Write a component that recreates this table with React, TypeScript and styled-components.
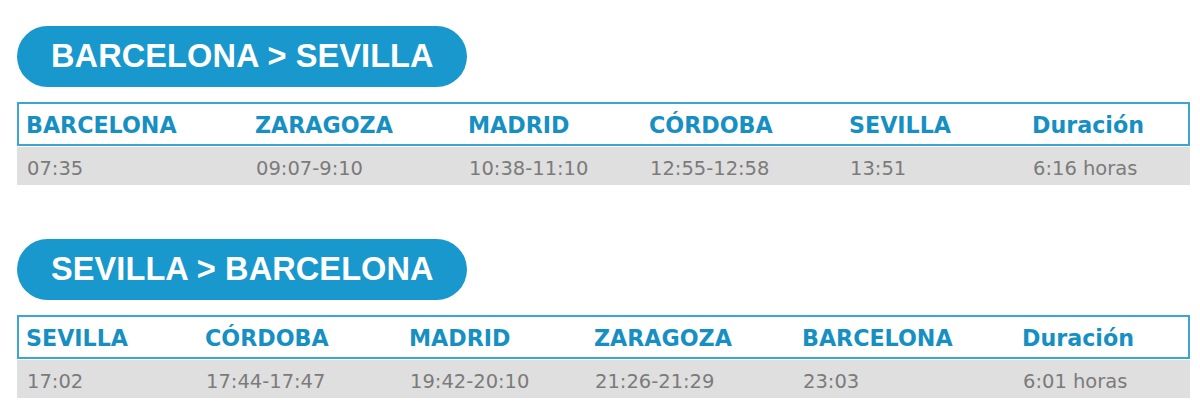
import React from "react";
import styled, { createGlobalStyle } from "styled-components";

const Colors = {
  Pill: "#1898cc",
  Head: "#168fc2",
  Border: "#3ba6d1",
  RowBg: "#dfdfdf",
  Cell: "#7b7b7b",
  White: "#ffffff",
};

const GlobalStyle = createGlobalStyle`
  html, body {
    margin: 0;
    padding: 0;
    background: ${Colors.White};
  }
`;

const Page = styled.div`
  display: flex;
  flex-direction: column;
  gap: 54px;
  padding: 26px 10px 0 17px;
  width: 1173px;
`;

const Section = styled.section`
  display: flex;
  flex-direction: column;
  align-items: flex-start;
  gap: 15px;
`;

const RoutePill = styled.div`
  height: 61px;
  display: flex;
  align-items: center;
  padding: 0 33px 0 34px;
  border-radius: 31px;
  background-color: ${Colors.Pill};
  color: ${Colors.White};
  font-family: "Liberation Sans", Arial, sans-serif;
  font-weight: 700;
  font-size: 32.5px;
  letter-spacing: 0.1px;
  white-space: nowrap;
`;

const Table = styled.div`
  width: 100%;
  display: flex;
  flex-direction: column;
  gap: 1px;
`;

const Row = styled.div<{ $cols: string; $head?: boolean }>`
  display: grid;
  grid-template-columns: ${(p) => p.$cols};
  align-items: center;
  box-sizing: border-box;
  height: ${(p) => (p.$head ? "44px" : "38px")};
  padding-left: ${(p) => (p.$head ? "7px" : "10px")};
  border: ${(p) => (p.$head ? `2px solid ${Colors.Border}` : "none")};
  background-color: ${(p) => (p.$head ? Colors.White : Colors.RowBg)};
`;

const HeadCell = styled.div`
  font-family: "DejaVu Sans", Verdana, sans-serif;
  font-weight: 700;
  font-size: 22.2px;
  color: ${Colors.Head};
  white-space: nowrap;
  padding-top: 1px;
`;

const Cell = styled.div`
  font-family: "DejaVu Sans", Verdana, sans-serif;
  font-size: 19.5px;
  color: ${Colors.Cell};
  white-space: nowrap;
  padding-top: 4px;
`;

type Route = {
  title: string;
  cols: string;
  stops: string[];
  times: string[];
};

const routes: Route[] = [
  {
    title: "BARCELONA > SEVILLA",
    cols: "229px 213px 181px 200px 183px 1fr",
    stops: ["BARCELONA", "ZARAGOZA", "MADRID", "CÓRDOBA", "SEVILLA", "Duración"],
    times: ["07:35", "09:07-9:10", "10:38-11:10", "12:55-12:58", "13:51", "6:16 horas"],
  },
  {
    title: "SEVILLA > BARCELONA",
    cols: "179px 204px 185px 208px 220px 1fr",
    stops: ["SEVILLA", "CÓRDOBA", "MADRID", "ZARAGOZA", "BARCELONA", "Duración"],
    times: ["17:02", "17:44-17:47", "19:42-20:10", "21:26-21:29", "23:03", "6:01 horas"],
  },
];

const Timetable: React.FC<{ route: Route }> = ({ route }) => (
  <Section>
    <RoutePill>{route.title}</RoutePill>
    <Table>
      <Row $cols={route.cols} $head>
        {route.stops.map((s) => (
          <HeadCell key={s}>{s}</HeadCell>
        ))}
      </Row>
      <Row $cols={route.cols}>
        {route.times.map((t, i) => (
          <Cell key={i}>{t}</Cell>
        ))}
      </Row>
    </Table>
  </Section>
);

const App: React.FC = () => (
  <>
    <GlobalStyle />
    <Page>
      {routes.map((r) => (
        <Timetable key={r.title} route={r} />
      ))}
    </Page>
  </>
);

export default App;
